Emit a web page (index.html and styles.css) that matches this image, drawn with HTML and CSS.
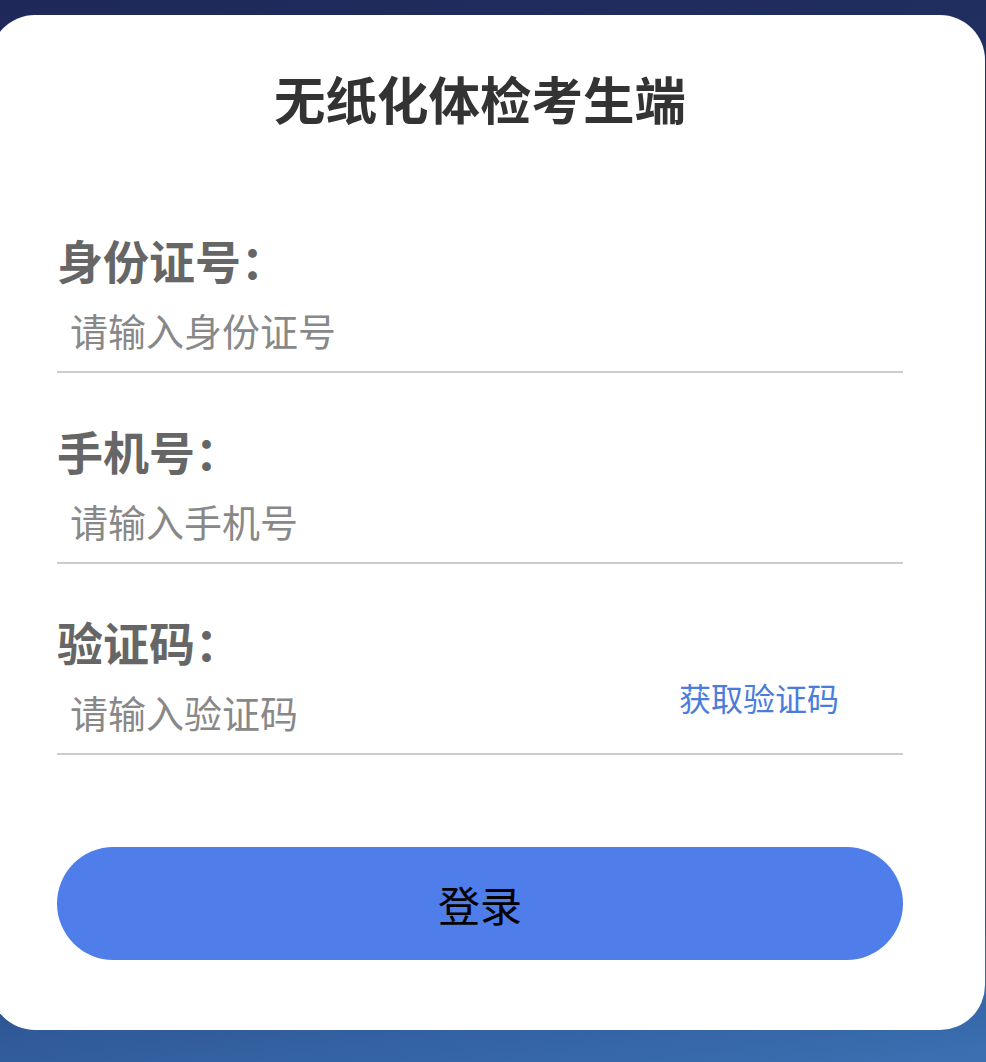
FILE: index.html
```html
<!DOCTYPE html>
<html lang="zh-CN">
<head>
    <meta charset="UTF-8">
    <meta name="viewport" content="width=device-width, initial-scale=1.0">
    <title>无纸化体检考生端</title>
    <link rel="stylesheet" href="styles.css">
</head>
<body>
    <div class="login-card">
        <div class="login-title">无纸化体检考生端</div>

        <div class="form">
            <div class="form-item">
                <div class="form-label">身份证号：</div>
                <div class="form-field">
                    <input class="form-input" type="text" placeholder="请输入身份证号">
                </div>
            </div>

            <div class="form-item">
                <div class="form-label">手机号：</div>
                <div class="form-field">
                    <input class="form-input" type="text" placeholder="请输入手机号">
                </div>
            </div>

            <div class="form-item">
                <div class="form-label">验证码：</div>
                <div class="form-field">
                    <input class="form-input" type="text" placeholder="请输入验证码">
                    <div class="code-button">获取验证码</div>
                </div>
            </div>

            <button class="login-button">登录</button>
        </div>
    </div>
</body>
</html>
```

FILE: styles.css
```css
html, body {
    height: 100%;
}

body {
    font-family: "Noto Sans CJK SC", "Noto Sans", sans-serif;
    margin: 0;
    padding: 15px 0 0;
    box-sizing: border-box;
    overflow: hidden;
    background: linear-gradient(172deg, #1e2959 0%, #243a70 45%, #2f5796 85%, #3a70b2 100%);
}

.login-card {
    width: 995px;
    height: 1015px;
    margin-left: -10px;
    box-sizing: border-box;
    padding: 53px 82px 0 67px;
    background-color: white;
    border-radius: 45px;
}

.login-title {
    font-size: 51.5px;
    line-height: 60px;
    font-weight: 700;
    color: #333;
    text-align: center;
}

.form {
    margin-top: 103px;
}

.form-item {
    margin-bottom: 49px;
}

.form-label {
    font-size: 46px;
    line-height: 56px;
    font-weight: 700;
    color: #666;
}

.form-field {
    display: flex;
    align-items: center;
    height: 84px;
    border-bottom: 2px solid #ccc;
}

.form-input {
    flex: 1;
    min-width: 0;
    height: 100%;
    padding: 0 0 0 13px;
    border: none;
    outline: none;
    background: none;
    font-family: inherit;
    font-size: 38px;
    color: #333;
}

.form-input::placeholder {
    color: #888;
}

.code-button {
    font-size: 32px;
    line-height: 40px;
    color: #4b7cdc;
    margin: 0 64px 28px 0;
}

.login-button {
    display: block;
    width: 100%;
    height: 113px;
    margin-top: 92px;
    border: none;
    border-radius: 57px;
    background-color: #4f7dea;
    font-family: inherit;
    font-size: 42px;
    color: black;
}
```
